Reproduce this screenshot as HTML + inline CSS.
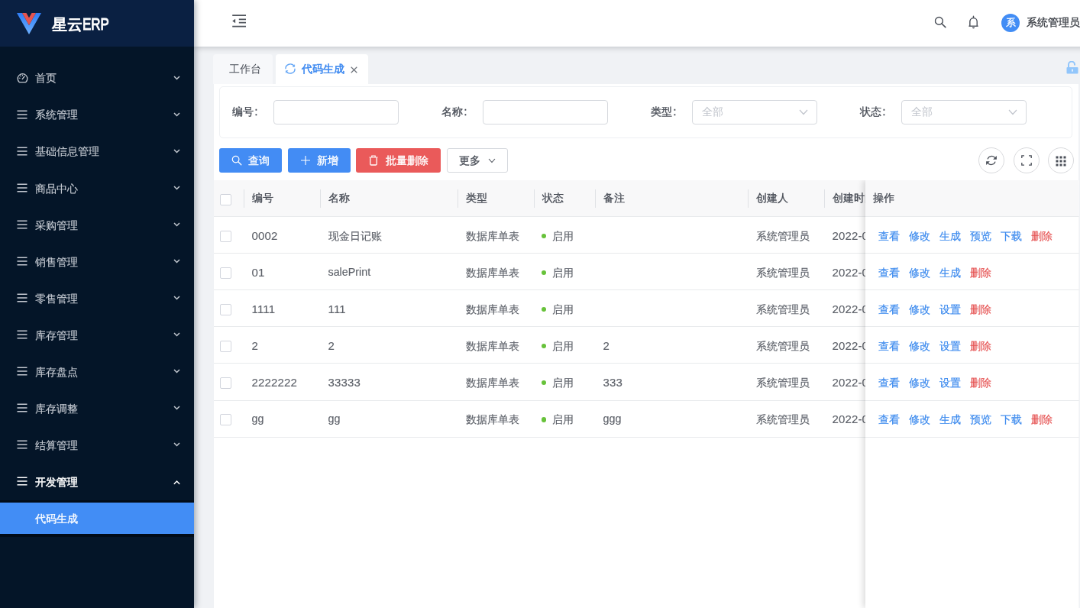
<!DOCTYPE html>
<html lang="zh">
<head>
<meta charset="utf-8">
<title>星云ERP</title>
<style>
html,body{margin:0;padding:0;width:1080px;height:608px;overflow:hidden;background:#f0f2f5;}
body{font-family:"Liberation Sans",sans-serif;}
#app{position:absolute;left:0;top:0;width:1414px;height:796px;transform:scale(0.7638);transform-origin:0 0;will-change:transform;background:#f0f2f5;overflow:hidden;font-size:13.8px;color:#515a6e;}
#app *{box-sizing:border-box;}
.abs{position:absolute;}
#side{position:absolute;left:0;top:0;width:254px;height:796px;background:#041528;box-shadow:2px 0 8px rgba(0,21,41,.35);z-index:5;}
#logo{position:absolute;left:0;top:0;width:254px;height:61.3px;background:#0a2042;}
#logo .t{position:absolute;left:67.5px;top:1.2px;line-height:61.5px;font-size:19.5px;font-weight:400;-webkit-text-stroke:0.95px;color:#fff;white-space:nowrap;}
#logo .erp{display:inline-block;font-size:21.6px;transform:scaleX(0.785);transform-origin:0 50%;margin-left:0.4px;}
.mi{position:absolute;left:0;width:254px;height:48px;line-height:48px;color:#c3c8d0;font-size:13.8px;white-space:nowrap;}
.mi .tx{position:absolute;left:45.7px;top:1.4px;-webkit-text-stroke:0.15px;}
.mi svg.ic{position:absolute;left:22px;top:17px;}
.mi svg.ch{position:absolute;left:227px;top:20px;}
.mi.open .tx{-webkit-text-stroke:0.45px;}
.mi.open svg.ch{top:21.2px;}
.mi.open{color:#fff;font-weight:400;-webkit-text-stroke:0.32px;}
#subw{position:absolute;left:0;top:654.6px;width:254px;height:48.6px;background:#010b17;}
#sub{position:absolute;left:0;top:658.2px;width:254px;height:41px;line-height:40.5px;background:#428df5;color:#fff;font-size:13.8px;font-weight:400;-webkit-text-stroke:0.32px;}
#sub span{position:absolute;left:45.7px;top:1.7px;}
#head{position:absolute;left:254px;top:0;width:1200px;height:61.3px;background:#fff;box-shadow:0 1px 8px rgba(0,10,20,.22);z-index:3;}
#head .nm{position:absolute;left:1090px;top:0;line-height:60px;font-size:13.8px;font-weight:400;-webkit-text-stroke:0.32px;color:#3b3f46;white-space:nowrap;}
#head .av{position:absolute;left:1057px;top:18px;width:24px;height:24px;border-radius:50%;background:#428df5;color:#fff;font-size:12.5px;line-height:24.5px;text-align:center;-webkit-text-stroke:0.3px;}
.tab{position:absolute;top:71px;height:39px;line-height:39px;font-size:13.8px;border-radius:4px 4px 0 0;white-space:nowrap;}
.tab span{position:absolute;top:0;}
#panel{position:absolute;left:279.5px;top:110px;width:1132.5px;height:686px;background:#fff;}
#card{position:absolute;left:7.5px;top:3px;width:1117px;height:68px;border:1px solid #eef0f3;border-radius:5px;background:#fff;}
.lb{position:absolute;top:17px;line-height:32px;font-size:13.8px;font-weight:400;-webkit-text-stroke:0.32px;color:#4a4f58;white-space:nowrap;}
.inp{position:absolute;top:17px;width:164px;height:32px;border:1px solid #d6d9de;border-radius:4px;background:#fff;}
.inp .ph{position:absolute;left:12px;top:0;line-height:30px;color:#c0c4cc;font-size:13.8px;}
.inp svg{position:absolute;left:139px;top:11px;}
.btn{position:absolute;top:84px;height:32px;line-height:32px;border-radius:3px;color:#fff;font-size:13.8px;font-weight:400;-webkit-text-stroke:0.32px;white-space:nowrap;}
.btn .tx{position:absolute;top:1.3px;}
.btn svg{position:absolute;}
.cbtn{position:absolute;top:83.2px;width:34px;height:34px;border:1px solid #d9dadd;border-radius:50%;background:#fff;}
.cbtn svg{position:absolute;left:8px;top:8px;}
#thead{position:absolute;left:0;top:126px;width:1133px;height:48px;background:#f8f8f9;border-bottom:1px solid #e8eaec;}
.th{position:absolute;top:0;line-height:48px;font-weight:400;-webkit-text-stroke:0.32px;color:#4a4f58;font-size:13.8px;white-space:nowrap;}
.sep{position:absolute;top:12px;width:1px;height:24px;background:#dfe1e5;}
.row{position:absolute;left:0;width:1133px;height:48.12px;border-bottom:1px solid #e8eaec;}
.td{position:absolute;top:1.5px;line-height:47px;font-size:13.8px;color:#5c6068;white-space:nowrap;-webkit-text-stroke:0.12px;}
.cb{position:absolute;left:8.7px;top:17.7px;width:15.2px;height:15.2px;border:1.9px solid #d3d6de;border-radius:2px;background:#fff;}
.td.l{font-size:15px;top:0.5px;letter-spacing:0.15px;}
.td.a{font-size:14.3px;top:0.5px;}
.dot{position:absolute;left:429.6px;top:21.6px;width:6.4px;height:6.4px;border-radius:50%;background:#67c23a;}
#fix{position:absolute;left:853px;top:126px;width:280px;height:560px;background:#fff;box-shadow:-3px 0 8px rgba(0,0,0,.14);clip-path:inset(0 0 0 -20px);}
#fix .fh{position:absolute;left:0;top:0;width:280px;height:48px;background:#f8f8f9;border-bottom:1px solid #e8eaec;}
#fix .fr{position:absolute;left:0;width:280px;height:48.12px;border-bottom:1px solid #e8eaec;line-height:47px;font-size:13.8px;white-space:nowrap;}
#fix .fr a{position:absolute;top:1.5px;color:#3f8cee;text-decoration:none;-webkit-text-stroke:0.2px;}
#fix .fr a.r{color:#e65555;}
</style>
</head>
<body>
<div id="app">
  <div id="side">
    <div id="logo">
      <svg class="abs" style="left:22px;top:17px" width="32" height="28" viewBox="0 0 32 28">
        <defs><linearGradient id="lg" x1="0" y1="0" x2="0" y2="1"><stop offset="0" stop-color="#2f7df6"/><stop offset="1" stop-color="#6db1ff"/></linearGradient></defs>
        <path d="M0 0H7L16 16L25 0H32L16 28Z" fill="url(#lg)"/>
        <path d="M7 0H12.5L16 6.2L19.5 0H25L16 16Z" fill="#e6544f"/>
      </svg>
      <div class="t">星云<span class="erp">ERP</span></div>
    </div>
    <div class="mi" style="top:78.00px"><svg class="ic" width="15" height="15" viewBox="0 0 15 15" style="left:22px;top:17px"><path d="M3.2 12.6A6.3 6.3 0 1 1 11.8 12.6Z" stroke="currentColor" stroke-width="1.3" fill="none" stroke-linejoin="round"/><path d="M7.2 8.6L10 5" stroke="currentColor" stroke-width="1.3" fill="none" stroke-linecap="round"/><path d="M3.2 7.3H4.2M4.6 4.2L5.3 4.9M7.5 3V4" stroke="currentColor" stroke-width="1.1" fill="none" stroke-linecap="round"/></svg><span class="tx">首页</span><svg class="ch" width="9" height="8" viewBox="0 0 9 8"><path d="M1 2L4.5 5.5L8 2" stroke="currentColor" stroke-width="1.5" fill="none"/></svg></div>
    <div class="mi" style="top:126.04px"><svg class="ic" width="14" height="14" viewBox="0 0 14 14"><path d="M0.5 2.2H13.5M0.5 7H13.5M0.5 11.8H13.5" stroke="currentColor" stroke-width="1.4" fill="none"/></svg><span class="tx">系统管理</span><svg class="ch" width="9" height="8" viewBox="0 0 9 8"><path d="M1 2L4.5 5.5L8 2" stroke="currentColor" stroke-width="1.5" fill="none"/></svg></div>
    <div class="mi" style="top:174.08px"><svg class="ic" width="14" height="14" viewBox="0 0 14 14"><path d="M0.5 2.2H13.5M0.5 7H13.5M0.5 11.8H13.5" stroke="currentColor" stroke-width="1.4" fill="none"/></svg><span class="tx">基础信息管理</span><svg class="ch" width="9" height="8" viewBox="0 0 9 8"><path d="M1 2L4.5 5.5L8 2" stroke="currentColor" stroke-width="1.5" fill="none"/></svg></div>
    <div class="mi" style="top:222.12px"><svg class="ic" width="14" height="14" viewBox="0 0 14 14"><path d="M0.5 2.2H13.5M0.5 7H13.5M0.5 11.8H13.5" stroke="currentColor" stroke-width="1.4" fill="none"/></svg><span class="tx">商品中心</span><svg class="ch" width="9" height="8" viewBox="0 0 9 8"><path d="M1 2L4.5 5.5L8 2" stroke="currentColor" stroke-width="1.5" fill="none"/></svg></div>
    <div class="mi" style="top:270.16px"><svg class="ic" width="14" height="14" viewBox="0 0 14 14"><path d="M0.5 2.2H13.5M0.5 7H13.5M0.5 11.8H13.5" stroke="currentColor" stroke-width="1.4" fill="none"/></svg><span class="tx">采购管理</span><svg class="ch" width="9" height="8" viewBox="0 0 9 8"><path d="M1 2L4.5 5.5L8 2" stroke="currentColor" stroke-width="1.5" fill="none"/></svg></div>
    <div class="mi" style="top:318.20px"><svg class="ic" width="14" height="14" viewBox="0 0 14 14"><path d="M0.5 2.2H13.5M0.5 7H13.5M0.5 11.8H13.5" stroke="currentColor" stroke-width="1.4" fill="none"/></svg><span class="tx">销售管理</span><svg class="ch" width="9" height="8" viewBox="0 0 9 8"><path d="M1 2L4.5 5.5L8 2" stroke="currentColor" stroke-width="1.5" fill="none"/></svg></div>
    <div class="mi" style="top:366.24px"><svg class="ic" width="14" height="14" viewBox="0 0 14 14"><path d="M0.5 2.2H13.5M0.5 7H13.5M0.5 11.8H13.5" stroke="currentColor" stroke-width="1.4" fill="none"/></svg><span class="tx">零售管理</span><svg class="ch" width="9" height="8" viewBox="0 0 9 8"><path d="M1 2L4.5 5.5L8 2" stroke="currentColor" stroke-width="1.5" fill="none"/></svg></div>
    <div class="mi" style="top:414.28px"><svg class="ic" width="14" height="14" viewBox="0 0 14 14"><path d="M0.5 2.2H13.5M0.5 7H13.5M0.5 11.8H13.5" stroke="currentColor" stroke-width="1.4" fill="none"/></svg><span class="tx">库存管理</span><svg class="ch" width="9" height="8" viewBox="0 0 9 8"><path d="M1 2L4.5 5.5L8 2" stroke="currentColor" stroke-width="1.5" fill="none"/></svg></div>
    <div class="mi" style="top:462.32px"><svg class="ic" width="14" height="14" viewBox="0 0 14 14"><path d="M0.5 2.2H13.5M0.5 7H13.5M0.5 11.8H13.5" stroke="currentColor" stroke-width="1.4" fill="none"/></svg><span class="tx">库存盘点</span><svg class="ch" width="9" height="8" viewBox="0 0 9 8"><path d="M1 2L4.5 5.5L8 2" stroke="currentColor" stroke-width="1.5" fill="none"/></svg></div>
    <div class="mi" style="top:510.36px"><svg class="ic" width="14" height="14" viewBox="0 0 14 14"><path d="M0.5 2.2H13.5M0.5 7H13.5M0.5 11.8H13.5" stroke="currentColor" stroke-width="1.4" fill="none"/></svg><span class="tx">库存调整</span><svg class="ch" width="9" height="8" viewBox="0 0 9 8"><path d="M1 2L4.5 5.5L8 2" stroke="currentColor" stroke-width="1.5" fill="none"/></svg></div>
    <div class="mi" style="top:558.40px"><svg class="ic" width="14" height="14" viewBox="0 0 14 14"><path d="M0.5 2.2H13.5M0.5 7H13.5M0.5 11.8H13.5" stroke="currentColor" stroke-width="1.4" fill="none"/></svg><span class="tx">结算管理</span><svg class="ch" width="9" height="8" viewBox="0 0 9 8"><path d="M1 2L4.5 5.5L8 2" stroke="currentColor" stroke-width="1.5" fill="none"/></svg></div>
    <div class="mi open" style="top:606.44px"><svg class="ic" width="14" height="14" viewBox="0 0 14 14"><path d="M0.5 2.2H13.5M0.5 7H13.5M0.5 11.8H13.5" stroke="currentColor" stroke-width="1.4" fill="none"/></svg><span class="tx">开发管理</span><svg class="ch" width="9" height="8" viewBox="0 0 9 8"><path d="M0.8 5.8L4.5 2L8.2 5.8" stroke="currentColor" stroke-width="1.5" fill="none"/></svg></div>
    <div id="subw"></div><div id="sub"><span>代码生成</span></div>
  </div>
  <div id="head">
    <svg class="abs" style="left:49.5px;top:19px" width="18" height="17" viewBox="0 0 18 17"><path d="M0.2 1.2H18M8.8 6.4H18M8.8 10.7H18M0.2 15.6H18" stroke="#4f545c" stroke-width="1.7" fill="none"/><path d="M4.1 5.7V11.3L0.2 8.5Z" fill="#4f545c"/></svg>
    <svg class="abs" style="left:969px;top:21px" width="16" height="16" viewBox="0 0 16 16"><circle cx="6.4" cy="6.4" r="4.9" stroke="#4a4f58" stroke-width="1.4" fill="none"/><path d="M10 10L14.8 14.6" stroke="#4a4f58" stroke-width="1.6" stroke-linecap="round"/></svg>
    <svg class="abs" style="left:1013px;top:20px" width="15" height="19" viewBox="0 0 15 19"><path d="M2.8 14V8.2A4.7 4.7 0 0 1 12.2 8.2V14" stroke="#4a4f58" stroke-width="1.35" fill="none"/><path d="M1.4 14.2H13.6" stroke="#4a4f58" stroke-width="1.35"/><path d="M7.5 1.2V3.4" stroke="#4a4f58" stroke-width="1.35" stroke-linecap="round"/><path d="M6.1 16A1.5 1.5 0 0 0 8.9 16Z" fill="#4a4f58" stroke="#4a4f58" stroke-width="0.7"/></svg>
    <div class="av">系</div>
    <div class="nm">系统管理员</div>
</div>
  
  <div class="tab" style="left:279.4px;width:77.8px;background:#f7f8fa;color:#4a4f58;"><span style="left:21px">工作台</span></div>
  <div class="tab" style="left:361.4px;width:120.4px;background:#fff;color:#3a87f0;font-weight:400;-webkit-text-stroke:0.5px;">
    <svg class="abs" style="left:11.4px;top:12.4px" width="14" height="14" viewBox="0 0 14 14"><path d="M1 7.2A6 5.7 0 0 1 12.2 3.9" stroke="#62a5f6" stroke-width="1.35" fill="none"/><path d="M13 6.8A6 5.7 0 0 1 1.8 10.1" stroke="#62a5f6" stroke-width="1.35" fill="none"/><path d="M12.6 1.6V4.3H9.9" stroke="#62a5f6" stroke-width="0.9" fill="none"/><path d="M1.4 12.4V9.7H4.1" stroke="#62a5f6" stroke-width="0.9" fill="none"/></svg>
    <span style="left:34px">代码生成</span>
    <svg class="abs" style="left:97.3px;top:15.6px" width="9" height="9" viewBox="0 0 9 9"><path d="M0.7 0.7L8.3 8.3M8.3 0.7L0.7 8.3" stroke="#70757d" stroke-width="1.25"/></svg>
  </div>
  <svg class="abs" style="left:1396px;top:80px" width="16" height="17" viewBox="0 0 16 17"><path d="M3 8V4.6A4 4 0 0 1 11 4.6V5.6" stroke="#92c6fb" stroke-width="2" fill="none"/><rect x="0.5" y="8" width="15" height="8.5" rx="1" fill="#92c6fb"/><rect x="7.3" y="10.6" width="1.4" height="3" fill="#fff"/></svg>

  <div id="panel">
    <div id="card">
      <div class="lb" style="left:15.6px">编号<span style="margin-left:2px">:</span></div><div class="inp" style="left:70px"></div>
      <div class="lb" style="left:289.6px">名称<span style="margin-left:2px">:</span></div><div class="inp" style="left:344px"></div>
      <div class="lb" style="left:563.6px">类型<span style="margin-left:2px">:</span></div><div class="inp" style="left:618px"><span class="ph">全部</span><svg width="12" height="8" viewBox="0 0 12 8"><path d="M1 1L6 6.5L11 1" stroke="#c0c4cc" stroke-width="1.2" fill="none"/></svg></div>
      <div class="lb" style="left:837.6px">状态<span style="margin-left:2px">:</span></div><div class="inp" style="left:892px"><span class="ph">全部</span><svg width="12" height="8" viewBox="0 0 12 8"><path d="M1 1L6 6.5L11 1" stroke="#c0c4cc" stroke-width="1.2" fill="none"/></svg></div>
      
    </div>
    
    <div class="btn" style="left:7.2px;width:82px;background:#438cf4;"><svg style="left:16px;top:9px" width="14" height="14" viewBox="0 0 14 14"><circle cx="5.6" cy="5.6" r="4.3" stroke="#fff" stroke-width="1.2" fill="none"/><path d="M8.8 8.8L12.8 12.8" stroke="#fff" stroke-width="1.3" stroke-linecap="round"/></svg><span class="tx" style="left:38px">查询</span></div>
    <div class="btn" style="left:97.2px;width:82px;background:#438cf4;"><svg style="left:17px;top:10px" width="12" height="12" viewBox="0 0 12 12"><path d="M6 0V12M0 6H12" stroke="#fff" stroke-width="1.1"/></svg><span class="tx" style="left:38px">新增</span></div>
    <div class="btn" style="left:186.9px;width:110.3px;background:#ea5a5a;"><svg style="left:17px;top:9px" width="12" height="14" viewBox="0 0 12 14"><path d="M0.5 3H11.5M3.8 2.6V1H8.2V2.6" stroke="#fff" stroke-width="1.2" fill="none"/><path d="M1.8 3.2V11.8A1.2 1.2 0 0 0 3 13H9A1.2 1.2 0 0 0 10.2 11.8V3.2" stroke="#fff" stroke-width="1.3" fill="none"/></svg><span class="tx" style="left:38.6px">批量删除</span></div>
    <div class="btn" style="left:305.3px;width:80px;background:#fff;border:1px solid #d6d9de;color:#4a4f58;line-height:30px;"><span class="tx" style="left:15px">更多</span><svg style="left:53px;top:12px" width="10" height="7" viewBox="0 0 10 7"><path d="M1 1L5 5.5L9 1" stroke="#4a4f58" stroke-width="1.05" fill="none"/></svg></div>
    <div class="cbtn" style="left:1001px"><svg width="16" height="16" viewBox="0 0 16 16"><path d="M3 6.4C4.4 1.8 10.6 1.2 12.8 4.8" stroke="#4a4f58" stroke-width="1.25" fill="none"/><path d="M14.9 1.9V6.7H10.1Z" fill="#4a4f58"/><path d="M13 9.6C11.6 14.2 5.4 14.8 3.2 11.2" stroke="#4a4f58" stroke-width="1.25" fill="none"/><path d="M1.1 14.1V9.3H5.9Z" fill="#4a4f58"/></svg></div>
    <div class="cbtn" style="left:1047px"><svg width="16" height="16" viewBox="0 0 16 16"><path d="M1.8 5V1.8H5M11 1.8H14.2V5M14.2 11V14.2H11M5 14.2H1.8V11" stroke="#4a4f58" stroke-width="1.3" fill="none"/></svg></div>
    <div class="cbtn" style="left:1092px"><svg style="top:8.7px" width="16" height="16" viewBox="0 0 16 16"><g fill="#4a4f58"><rect x="1.5" y="1.5" width="3" height="3"/><rect x="6.5" y="1.5" width="3" height="3"/><rect x="11.5" y="1.5" width="3" height="3"/><rect x="1.5" y="6.5" width="3" height="3"/><rect x="6.5" y="6.5" width="3" height="3"/><rect x="11.5" y="6.5" width="3" height="3"/><rect x="1.5" y="11.5" width="3" height="3"/><rect x="6.5" y="11.5" width="3" height="3"/><rect x="11.5" y="11.5" width="3" height="3"/></g></svg></div>

    <div id="thead"><div class="cb" style="top:17.5px"></div><div class="sep" style="left:39px"></div><div class="th" style="left:50px">编号</div><div class="sep" style="left:139px"></div><div class="th" style="left:150px">名称</div><div class="sep" style="left:319px"></div><div class="th" style="left:330px">类型</div><div class="sep" style="left:419px"></div><div class="th" style="left:430px">状态</div><div class="sep" style="left:499px"></div><div class="th" style="left:510px">备注</div><div class="sep" style="left:699px"></div><div class="th" style="left:710px">创建人</div><div class="sep" style="left:799px"></div><div class="th" style="left:810px">创建时间</div></div>
    <div class="row" style="top:174.00px"><div class="cb"></div><div class="td l" style="left:50px">0002</div><div class="td" style="left:150px">现金日记账</div><div class="td" style="left:330px">数据库单表</div><div class="dot"></div><div class="td" style="left:443.4px">启用</div><div class="td l" style="left:510px"></div><div class="td" style="left:710px">系统管理员</div><div class="td l" style="left:810px">2022-04-20</div></div>
    <div class="row" style="top:222.12px"><div class="cb"></div><div class="td l" style="left:50px">01</div><div class="td a" style="left:150px">salePrint</div><div class="td" style="left:330px">数据库单表</div><div class="dot"></div><div class="td" style="left:443.4px">启用</div><div class="td l" style="left:510px"></div><div class="td" style="left:710px">系统管理员</div><div class="td l" style="left:810px">2022-04-20</div></div>
    <div class="row" style="top:270.24px"><div class="cb"></div><div class="td l" style="left:50px">1111</div><div class="td l" style="left:150px">111</div><div class="td" style="left:330px">数据库单表</div><div class="dot"></div><div class="td" style="left:443.4px">启用</div><div class="td l" style="left:510px"></div><div class="td" style="left:710px">系统管理员</div><div class="td l" style="left:810px">2022-04-20</div></div>
    <div class="row" style="top:318.36px"><div class="cb"></div><div class="td l" style="left:50px">2</div><div class="td l" style="left:150px">2</div><div class="td" style="left:330px">数据库单表</div><div class="dot"></div><div class="td" style="left:443.4px">启用</div><div class="td l" style="left:510px">2</div><div class="td" style="left:710px">系统管理员</div><div class="td l" style="left:810px">2022-04-20</div></div>
    <div class="row" style="top:366.48px"><div class="cb"></div><div class="td l" style="left:50px">2222222</div><div class="td l" style="left:150px">33333</div><div class="td" style="left:330px">数据库单表</div><div class="dot"></div><div class="td" style="left:443.4px">启用</div><div class="td l" style="left:510px">333</div><div class="td" style="left:710px">系统管理员</div><div class="td l" style="left:810px">2022-04-20</div></div>
    <div class="row" style="top:414.60px"><div class="cb"></div><div class="td a" style="left:50px">gg</div><div class="td a" style="left:150px">gg</div><div class="td" style="left:330px">数据库单表</div><div class="dot"></div><div class="td" style="left:443.4px">启用</div><div class="td a" style="left:510px">ggg</div><div class="td" style="left:710px">系统管理员</div><div class="td l" style="left:810px">2022-04-20</div></div>
    
    <div id="fix">
      <div class="fh"><div class="th" style="left:10px">操作</div></div>
      <div class="fr" style="top:48.00px"><a style="left:17px">查看</a><a style="left:57px">修改</a><a style="left:97px">生成</a><a style="left:137px">预览</a><a style="left:177px">下载</a><a class="r" style="left:217px">删除</a></div>
      <div class="fr" style="top:96.12px"><a style="left:17px">查看</a><a style="left:57px">修改</a><a style="left:97px">生成</a><a class="r" style="left:137px">删除</a></div>
      <div class="fr" style="top:144.24px"><a style="left:17px">查看</a><a style="left:57px">修改</a><a style="left:97px">设置</a><a class="r" style="left:137px">删除</a></div>
      <div class="fr" style="top:192.36px"><a style="left:17px">查看</a><a style="left:57px">修改</a><a style="left:97px">设置</a><a class="r" style="left:137px">删除</a></div>
      <div class="fr" style="top:240.48px"><a style="left:17px">查看</a><a style="left:57px">修改</a><a style="left:97px">设置</a><a class="r" style="left:137px">删除</a></div>
      <div class="fr" style="top:288.60px"><a style="left:17px">查看</a><a style="left:57px">修改</a><a style="left:97px">生成</a><a style="left:137px">预览</a><a style="left:177px">下载</a><a class="r" style="left:217px">删除</a></div>
      
    </div>
  </div>
</div>
</body>
</html>
